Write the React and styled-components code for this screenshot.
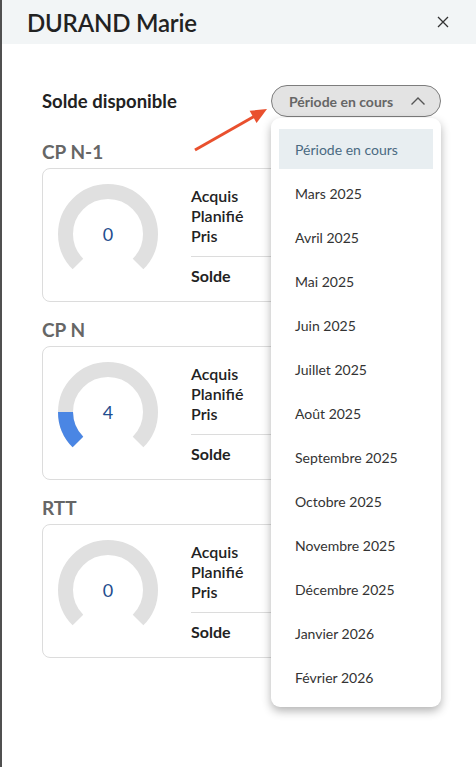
import React from 'react'
import styled, { createGlobalStyle } from 'styled-components'

const GlobalStyle = createGlobalStyle`
    html, body { margin: 0; padding: 0; background: #fff; }
    body { font-family: Lato, "Open Sans", sans-serif; }
    * { box-sizing: border-box; }
`

const periods = [
    'Période en cours', 'Mars 2025', 'Avril 2025', 'Mai 2025', 'Juin 2025', 'Juillet 2025', 'Août 2025',
    'Septembre 2025', 'Octobre 2025', 'Novembre 2025', 'Décembre 2025', 'Janvier 2026', 'Février 2026'
]

const balances = [
    { title: 'CP N-1', value: 0, ratio: 0 },
    { title: 'CP N', value: 4, ratio: 1 / 6 },
    { title: 'RTT', value: 0, ratio: 0 },
]

const point = (deg) => {
    const rad = (deg * Math.PI) / 180
    return [50 + 42.5 * Math.cos(rad), 50 + 42.5 * Math.sin(rad)]
}

const arc = (from, to) => {
    const [x1, y1] = point(from)
    const [x2, y2] = point(to)
    const large = to - from > 180 ? 1 : 0
    return `M ${x1} ${y1} A 42.5 42.5 0 ${large} 1 ${x2} ${y2}`
}

const Gauge = ({ value, ratio }) => (
    <GaugeBox>
        <svg width="100" height="100" viewBox="0 0 100 100">
            <path d={arc(135, 405)} fill="none" stroke="#e0e0e0" strokeWidth="15" />
            {ratio > 0 && <path d={arc(135, 135 + 270 * ratio)} fill="none" stroke="#4a86e4" strokeWidth="15" />}
        </svg>
        <GaugeValue>{value}</GaugeValue>
    </GaugeBox>
)

const App = () => {
    return (
        <Page>
            <GlobalStyle />
            <Header>
                <Title>DURAND Marie</Title>
                <CloseButton aria-label="Fermer">
                    <svg width="12" height="12" viewBox="0 0 12 12">
                        <path d="M1 1 L11 11 M11 1 L1 11" stroke="#333" strokeWidth="1.3" />
                    </svg>
                </CloseButton>
            </Header>

            <Body>
                <TopRow>
                    <Heading>Solde disponible</Heading>
                    <SelectWrapper>
                        <Select>
                            <span>Période en cours</span>
                            <svg width="16" height="10" viewBox="0 0 16 10">
                                <polyline points="1.5 8.5 8 2 14.5 8.5" fill="none" stroke="#555" strokeWidth="1.4" />
                            </svg>
                        </Select>
                        <Menu>
                            {periods.map((p, i) => (
                                <MenuItem key={p} $active={i === 0}>{p}</MenuItem>
                            ))}
                        </Menu>
                    </SelectWrapper>
                </TopRow>

                {balances.map((b) => (
                    <Section key={b.title}>
                        <SectionTitle>{b.title}</SectionTitle>
                        <Card>
                            <Gauge value={b.value} ratio={b.ratio} />
                            <Labels>
                                <Label>Acquis</Label>
                                <Label>Planifié</Label>
                                <Label>Pris</Label>
                                <Divider />
                                <Label $strong>Solde</Label>
                            </Labels>
                        </Card>
                    </Section>
                ))}

                <Pointer width="82" height="52" viewBox="0 0 82 52">
                    <line x1="5" y1="46" x2="64" y2="12.5" stroke="#e9502e" strokeWidth="3" />
                    <polygon points="77,5 66.6,19 59.6,6.8" fill="#e9502e" />
                </Pointer>
            </Body>
        </Page>
    )
}

export default App

const Page = styled.div({
    minHeight: '100vh',
    borderLeft: '2px solid #505050',
    background: '#fff',
})

const Header = styled.div({
    height: '44px',
    background: '#f2f5f6',
    display: 'flex',
    alignItems: 'center',
    justifyContent: 'space-between',
    padding: '0 27px 0 25px',
})

const Title = styled.h1({
    margin: 0,
    fontSize: '24px',
    fontWeight: 600,
    color: '#222',
    letterSpacing: '-0.2px',
})

const CloseButton = styled.button({
    border: 'none',
    background: 'transparent',
    padding: 0,
    display: 'flex',
    cursor: 'pointer',
})

const Body = styled.div({
    position: 'relative',
    padding: '41px 35px 40px 40px',
    display: 'flex',
    flexDirection: 'column',
    gap: '17px',
})

const TopRow = styled.div({
    display: 'flex',
    alignItems: 'center',
    justifyContent: 'space-between',
    marginBottom: '7px',
})

const Heading = styled.h2({
    margin: 0,
    fontSize: '18.5px',
    fontWeight: 700,
    color: '#222',
})

const SelectWrapper = styled.div({
    position: 'relative',
    zIndex: 2,
})

const Select = styled.button({
    width: '170px',
    height: '32px',
    borderRadius: '16px',
    border: '1px solid #7d7d7d',
    background: '#e3e3e3',
    display: 'flex',
    alignItems: 'center',
    justifyContent: 'space-between',
    padding: '0 14px 0 17px',
    fontFamily: 'Lato, sans-serif',
    fontSize: '14px',
    fontWeight: 700,
    color: '#666',
})

const Menu = styled.div({
    position: 'absolute',
    top: 'calc(100% + 1px)',
    left: 0,
    width: '170px',
    background: '#fff',
    borderRadius: '9px',
    boxShadow: '0 4px 10px rgba(0, 0, 0, 0.3)',
    padding: '11px 8px 10px',
    display: 'flex',
    flexDirection: 'column',
    gap: '4px',
})

const MenuItem = styled.div(({ $active }) => ({
    height: '40px',
    display: 'flex',
    alignItems: 'center',
    padding: '0 16px',
    fontSize: '14px',
    color: $active ? '#4a6a82' : '#333',
    background: $active ? '#e8eef1' : 'transparent',
}))

const Section = styled.section({
    display: 'flex',
    flexDirection: 'column',
    gap: '5px',
})

const SectionTitle = styled.h3({
    margin: 0,
    fontSize: '19px',
    lineHeight: '22px',
    fontWeight: 700,
    color: '#666',
})

const Card = styled.div({
    height: '134px',
    border: '1px solid #dcdcdc',
    borderRadius: '8px',
    padding: '15px 15px',
    display: 'flex',
    gap: '33px',
})

const GaugeBox = styled.div({
    position: 'relative',
    width: '100px',
    height: '100px',
    flexShrink: 0,
})

const GaugeValue = styled.div({
    position: 'absolute',
    inset: 0,
    display: 'flex',
    alignItems: 'center',
    justifyContent: 'center',
    fontSize: '18px',
    color: '#1f4d8e',
})

const Labels = styled.div({
    flex: 1,
    display: 'flex',
    flexDirection: 'column',
    paddingTop: '2px',
})

const Label = styled.div(({ $strong }) => ({
    fontSize: '16px',
    lineHeight: '20px',
    fontWeight: $strong ? 700 : 600,
    color: '#222',
}))

const Divider = styled.div({
    height: '1px',
    flexShrink: 0,
    background: '#dcdcdc',
    margin: '10px 0 9px',
})

const Pointer = styled.svg({
    position: 'absolute',
    left: '188px',
    top: '60px',
    zIndex: 3,
})
